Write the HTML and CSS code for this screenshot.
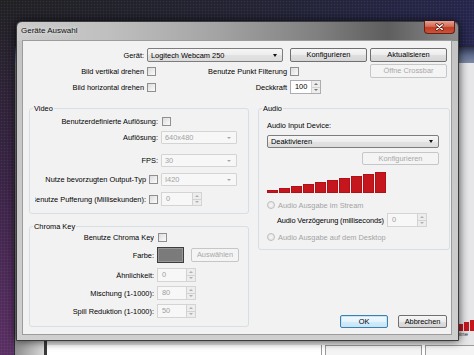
FILE: index.html
```html
<!DOCTYPE html>
<html lang="de">
<head>
    <meta charset="UTF-8">
    <meta name="viewport" content="width=device-width, initial-scale=1.0">
    <title>Geräte Auswahl</title>
    <link rel="stylesheet" href="styles.css">
</head>
<body>
<div class="desktop">

    <!-- window behind the dialog -->
    <div class="backwin">
        <div class="bw-title"></div>
        <div class="bw-body">
            <div class="bw-side"></div>
            <div class="bw-main">
                <div class="bw-meter">
                    <span style="height:7px"></span>
                    <span style="height:9px"></span>
                    <span style="height:11px"></span>
                </div>
                <div class="bw-text">mine</div>
                <div class="bw-boxes">
                    <div class="bw-box wide"></div>
                    <div class="bw-box mid"></div>
                    <div class="bw-box"></div>
                </div>
            </div>
        </div>
    </div>

    <div class="dialog">
        <div class="titlebar">
            <span class="title">Geräte Auswahl</span>
            <span class="close">
                <svg width="31" height="13" viewBox="0 0 31 13">
                    <path d="M12.5 3.5 L18.5 8.5 M18.5 3.5 L12.5 8.5" stroke="#5a160c" stroke-width="3" stroke-linecap="round"/>
                    <path d="M12.5 3.5 L18.5 8.5 M18.5 3.5 L12.5 8.5" stroke="#ffffff" stroke-width="1.5" stroke-linecap="round"/>
                </svg>
            </span>
        </div>

        <div class="client">
            <div class="top-grid">
                <label class="lbl">Gerät:</label>
                <div class="combo wide"><span>Logitech Webcam 250</span><i class="arrow"></i></div>
                <button class="btn">Konfigurieren</button>
                <button class="btn">Aktualisieren</button>

                <label class="lbl">Bild vertikal drehen</label>
                <div class="split"><span class="chk"></span><label>Benutze Punkt Filterung</label></div>
                <div class="cell"><span class="chk"></span></div>
                <button class="btn" disabled>Öffne Crossbar</button>

                <label class="lbl">Bild horizontal drehen</label>
                <div class="split"><span class="chk"></span><label>Deckkraft</label></div>
                <div class="cell">
                    <div class="spin deck"><span class="val">100</span><span class="arrows"><i class="up"></i><i class="down"></i></span></div>
                </div>
                <span></span>
            </div>

            <div class="groups">
                <div class="col-left">
                    <fieldset class="group video">
                        <legend>Video</legend>
                        <div class="gbody">
                            <div class="frow">
                                <div class="flbl"><span>Benutzerdefinierte Auflösung:</span></div>
                                <div class="fctl"><span class="chk"></span></div>
                            </div>
                            <div class="frow">
                                <div class="flbl"><span>Auflösung:</span></div>
                                <div class="combo off"><span>640x480</span><i class="arrow"></i></div>
                            </div>
                            <div class="frow">
                                <div class="flbl"><span>FPS:</span></div>
                                <div class="combo off"><span>30</span><i class="arrow"></i></div>
                            </div>
                            <div class="frow">
                                <div class="flbl"><span>Nutze bevorzugten Output-Typ</span><span class="chk"></span></div>
                                <div class="combo off"><span>I420</span><i class="arrow"></i></div>
                            </div>
                            <div class="frow">
                                <div class="flbl"><span>Benutze Pufferung (Millisekunden):</span><span class="chk"></span></div>
                                <div class="fctl">
                                    <div class="spin off buf"><span class="val">0</span><span class="arrows"><i class="up"></i><i class="down"></i></span></div>
                                </div>
                            </div>
                        </div>
                    </fieldset>

                    <fieldset class="group chroma">
                        <legend>Chroma Key</legend>
                        <div class="gbody">
                            <div class="frow">
                                <div class="flbl"><span>Benutze Chroma Key</span></div>
                                <div class="fctl"><span class="chk"></span></div>
                            </div>
                            <div class="frow">
                                <div class="flbl"><span>Farbe:</span></div>
                                <div class="fctl"><span class="swatch"></span><button class="btn pick" disabled>Auswählen</button></div>
                            </div>
                            <div class="frow">
                                <div class="flbl"><span>Ähnlichkeit:</span></div>
                                <div class="fctl">
                                    <div class="spin off key"><span class="val">0</span><span class="arrows"><i class="up"></i><i class="down"></i></span></div>
                                </div>
                            </div>
                            <div class="frow">
                                <div class="flbl"><span>Mischung (1-1000):</span></div>
                                <div class="fctl">
                                    <div class="spin off key"><span class="val">80</span><span class="arrows"><i class="up"></i><i class="down"></i></span></div>
                                </div>
                            </div>
                            <div class="frow">
                                <div class="flbl"><span>Spill Reduktion (1-1000):</span></div>
                                <div class="fctl">
                                    <div class="spin off key"><span class="val">50</span><span class="arrows"><i class="up"></i><i class="down"></i></span></div>
                                </div>
                            </div>
                        </div>
                    </fieldset>
                </div>

                <div class="col-right">
                    <fieldset class="group audio">
                        <legend>Audio</legend>
                        <div class="gbody">
                            <div class="a-label">Audio Input Device:</div>
                            <div class="combo"><span>Deaktivieren</span><i class="arrow"></i></div>
                            <button class="btn cfg" disabled>Konfigurieren</button>
                            <div class="meter">
                                <span style="height:3px"></span>
                                <span style="height:5px"></span>
                                <span style="height:7px"></span>
                                <span style="height:9px"></span>
                                <span style="height:11px"></span>
                                <span style="height:13px"></span>
                                <span style="height:15px"></span>
                                <span style="height:17px"></span>
                                <span style="height:19px"></span>
                                <span style="height:21px"></span>
                            </div>
                            <div class="radio-row"><span class="radio"></span>Audio Ausgabe im Stream</div>
                            <div class="delay-row">
                                <span class="delay-lbl">Audio Verzögerung (milliseconds)</span>
                                <div class="spin off delay"><span class="val">0</span><span class="arrows"><i class="up"></i><i class="down"></i></span></div>
                            </div>
                            <div class="radio-row last"><span class="radio"></span>Audio Ausgabe auf dem Desktop</div>
                        </div>
                    </fieldset>

                    <div class="dlg-buttons">
                        <button class="btn default">OK</button>
                        <button class="btn cancel">Abbrechen</button>
                    </div>
                </div>
            </div>
        </div>
    </div>
</div>
</body>
</html>
```

FILE: styles.css
```css
* {
    margin: 0;
    padding: 0;
    box-sizing: border-box;
}

body {
    width: 474px;
    height: 355px;
    overflow: hidden;
    font-family: "Liberation Sans", Arial, sans-serif;
    font-size: 7.4px;
    color: #000;
}

.desktop {
    position: relative;
    width: 474px;
    height: 355px;
    overflow: hidden;
    background:
        radial-gradient(circle, rgba(255, 255, 255, 0.07) 0.7px, transparent 1.1px) 0 0 / 3px 3px,
        radial-gradient(ellipse at 0% 100%, #5a2f63 0%, rgba(72, 36, 82, 0.6) 35%, transparent 70%),
        linear-gradient(135deg, #202023 0%, #232336 35%, #262656 70%, #2b2b60 100%);
}

/* window in the back */
.backwin {
    position: absolute;
    left: 14px;
    top: 46px;
    width: 480px;
    height: 330px;
    display: flex;
    flex-direction: column;
    background: #cfcfd4;
    border: 1px solid #2a2a35;
}

.bw-title {
    height: 16px;
    background: linear-gradient(#2d3350, #5d6a8a 50%, #7d8aa6);
}

.bw-body {
    flex: 1;
    display: flex;
}

.bw-side {
    width: 32px;
    background: linear-gradient(to right, #8d8d8d, #d8d8d8);
    border-right: 3px solid #3a3a3a;
}

.bw-main {
    flex: 1;
    display: flex;
    flex-direction: column;
    justify-content: flex-end;
    background: #e6e6e8;
}

.bw-meter {
    display: flex;
    align-items: flex-end;
    gap: 1px;
    height: 12px;
    margin-left: 411px;
}

.bw-meter span {
    width: 5px;
    background: #c5161d;
}

.bw-text {
    margin-left: 408px;
    height: 8px;
    font-size: 6px;
    color: #333;
}

.bw-boxes {
    display: flex;
    gap: 3px;
    height: 30px;
    margin-top: 6px;
    background: #fff;
}

.bw-box {
    flex: 1;
    border: 1px solid #9a9a9a;
    background: #f4f4f4;
}

.bw-box.wide {
    flex: 0 0 275px;
    background: #fff;
    border-width: 0 1px 0 0;
}

.bw-box.mid {
    flex: 0 0 97px;
}

/* dialog frame */
.dialog {
    position: absolute;
    left: 16px;
    top: 21px;
    width: 443px;
    height: 320px;
    display: flex;
    flex-direction: column;
    padding: 0 6px 5px 5px;
    border: 1px solid #3b3b3b;
    border-radius: 6px 6px 0 0;
    background:
        linear-gradient(to right, #cbcbcb 0%, #c0c0c0 20%, #a4a4a4 45%, #808080 68%, #5e5e5e 84%, #8c8c8c 100%) top / 100% 19px no-repeat,
        linear-gradient(#c4c4c4, #cfcfcf);
    box-shadow: 0 0 10px rgba(0, 0, 0, 0.75);
}

.titlebar {
    height: 18px;
    display: flex;
    justify-content: space-between;
    align-items: flex-start;
}

.title {
    margin-left: -1px;
    line-height: 17px;
    font-size: 8px;
    color: #111;
    text-shadow: 0 0 4px rgba(255, 255, 255, 0.9);
}

.close {
    width: 31px;
    height: 13px;
    margin-top: -1px;
    margin-right: -3px;
    border: 1px solid #6a1e14;
    border-top: 0;
    border-radius: 0 0 4px 4px;
    background: linear-gradient(#e6a392 0%, #d46a54 45%, #c13c24 55%, #c9553a 100%);
    display: flex;
}

.client {
    flex: 1;
    display: flex;
    flex-direction: column;
    padding: 7px 1px 7px 6px;
    background: #f2f2f2;
    border: 1px solid #9c9c9c;
}

/* top rows */
.top-grid {
    display: grid;
    grid-template-columns: 118px 143px 80px 77px;
    grid-template-rows: repeat(3, 14px);
    row-gap: 2px;
    align-items: center;
}

.lbl {
    text-align: right;
    padding-right: 3px;
    white-space: nowrap;
}

.split {
    display: flex;
    align-items: center;
    justify-content: space-between;
    padding-right: 3px;
    white-space: nowrap;
}

.cell {
    display: flex;
    align-items: center;
}

/* controls */
.btn {
    font: inherit;
    color: #000;
    height: 14px;
    width: 77px;
    border: 1px solid #707070;
    border-radius: 2px;
    background: linear-gradient(#f6f6f6, #ececec 50%, #dfdfdf 51%, #d5d5d5);
    display: flex;
    align-items: center;
    justify-content: center;
    line-height: 1;
}

.btn:disabled {
    border-color: #c4c6c8;
    background: #f4f4f4;
    color: #a8a8a8;
}

.btn.default {
    width: 48px;
    height: 13px;
    border-color: #3c7fb1;
    background: linear-gradient(#f2f9fd, #e4f3fc 50%, #d4ecfa 51%, #c6e4f6);
    box-shadow: inset 0 0 0 1px #c4e6f7;
}

.btn.cancel {
    width: 49px;
    height: 13px;
}

.combo {
    display: flex;
    align-items: center;
    justify-content: space-between;
    height: 13px;
    padding: 0 5px 0 3px;
    border: 1px solid #7d7d7d;
    border-radius: 2px;
    background: linear-gradient(#f6f6f6, #ededed 50%, #e2e2e2 51%, #dcdcdc);
    white-space: nowrap;
}

.combo.wide {
    width: 136px;
    height: 14px;
}

.arrow {
    width: 0;
    height: 0;
    border-left: 2.5px solid transparent;
    border-right: 2.5px solid transparent;
    border-top: 3px solid #111;
}

.combo.off {
    border-color: #d4d4d4;
    border-radius: 1px;
    background: #f7f7f7;
    color: #a2a2a2;
}

.combo.off .arrow {
    border-left-width: 2px;
    border-right-width: 2px;
    border-top: 2px solid #a8a8a8;
}

.chk {
    width: 9px;
    height: 9px;
    flex-shrink: 0;
    border: 1px solid #8f8f8f;
    background: linear-gradient(135deg, #dcdcdc, #fbfbfb);
}

.spin {
    display: flex;
    height: 14px;
    border: 1px solid #abadb3;
    background: #fff;
}

.spin .val {
    flex: 1;
    padding-left: 4px;
    line-height: 12px;
}

.spin .arrows {
    width: 9px;
    display: flex;
    flex-direction: column;
    border-left: 1px solid #d2d2d2;
    background: #ededed;
}

.arrows i {
    flex: 1;
    display: flex;
    align-items: center;
    justify-content: center;
}

.arrows i + i {
    border-top: 1px solid #d2d2d2;
}

.arrows .up::before,
.arrows .down::before {
    content: "";
    border-left: 2px solid transparent;
    border-right: 2px solid transparent;
}

.arrows .up::before {
    border-bottom: 2px solid #777;
}

.arrows .down::before {
    border-top: 2px solid #777;
}

.spin.off {
    border-color: #d4d4d4;
    background: #f7f7f7;
    color: #a0a0a0;
}

.spin.off .arrows .up::before {
    border-bottom-color: #b0b0b0;
}

.spin.off .arrows .down::before {
    border-top-color: #b0b0b0;
}

.spin.deck {
    width: 31px;
}

.spin.buf {
    width: 41px;
}

.spin.key {
    width: 39px;
}

.spin.delay {
    width: 40px;
}

.radio {
    width: 8px;
    height: 8px;
    border-radius: 50%;
    border: 1px solid #bdbdbd;
    background: radial-gradient(#f6f6f6, #e2e2e2);
}

.swatch {
    width: 27px;
    height: 16px;
    border: 1px solid #3d3d3d;
    background: #7b7b7b;
    box-shadow: inset 0 0 0 1px #989898;
}

.btn.pick {
    width: 48px;
    height: 14px;
    margin-left: 7px;
}

/* group boxes */
.groups {
    display: grid;
    grid-template-columns: 220px 192px;
    column-gap: 9px;
    margin-top: 10px;
}

.col-left {
    display: flex;
    flex-direction: column;
    gap: 8px;
}

.col-right {
    display: flex;
    flex-direction: column;
}

.group {
    min-width: 0;
    margin: 0;
    padding: 0;
    border: 1px solid #d5dfe5;
    border-radius: 3px;
}

.group legend {
    margin-left: 3px;
    padding: 0 1px;
    line-height: 9px;
    color: #000;
}

.gbody {
    display: flex;
    flex-direction: column;
    padding: 0 0 7px 5px;
}

.frow {
    display: grid;
    grid-template-columns: 123px 76px;
    column-gap: 3px;
    align-items: center;
}

.flbl {
    display: flex;
    justify-content: flex-end;
    align-items: center;
    gap: 3px;
    overflow: hidden;
    white-space: nowrap;
}

.flbl span {
    flex-shrink: 0;
}

.fctl {
    display: flex;
    align-items: center;
}

.fctl > .chk {
    margin-left: 1px;
}

.video .frow .combo { height: 13px; }
.video .frow:nth-child(1) { margin-top: 2px; height: 12px; }
.video .frow:nth-child(2) { margin-top: 4px; height: 13px; }
.video .frow:nth-child(3) { margin-top: 10px; height: 13px; }
.video .frow:nth-child(4) { margin-top: 6px; height: 13px; }
.video .frow:nth-child(5) { margin-top: 6px; height: 14px; }

.chroma .gbody {
    padding-bottom: 8px;
}

.chroma .frow {
    grid-template-columns: 119px 84px;
}

.chroma .frow:nth-child(1) { margin-top: 1px; height: 10px; }
.chroma .frow:nth-child(2) { margin-top: 5px; height: 16px; }
.chroma .frow:nth-child(3) { margin-top: 5px; height: 14px; }
.chroma .frow:nth-child(4) { margin-top: 4px; height: 14px; }
.chroma .frow:nth-child(5) { margin-top: 4px; height: 14px; }

.audio .gbody {
    padding: 0 10px 7px 8px;
}

.a-label {
    margin-top: 8px;
    line-height: 9px;
}

.audio .combo {
    margin-top: 5px;
}

.btn.cfg {
    align-self: flex-end;
    height: 13px;
    margin-top: 4px;
}

.meter {
    display: flex;
    align-items: flex-end;
    gap: 1px;
    height: 21px;
    margin-top: 7px;
}

.meter span {
    width: 11px;
    background: #c5161d;
    box-shadow: inset 0 0 0 1px #b01017;
}

.radio-row {
    display: flex;
    align-items: center;
    gap: 3px;
    height: 10px;
    margin-top: 7px;
    color: #a3a3a3;
    white-space: nowrap;
}

.radio-row.last {
    margin-top: 5px;
}

.delay-row {
    display: grid;
    grid-template-columns: 110px 40px;
    align-items: center;
    height: 14px;
    margin-top: 3px;
    padding-left: 10px;
    white-space: nowrap;
}

.delay-lbl {
    letter-spacing: -0.1px;
}

.dlg-buttons {
    display: flex;
    justify-content: flex-end;
    gap: 10px;
    margin-top: auto;
    margin-bottom: -1px;
    padding-right: 3px;
}
```
